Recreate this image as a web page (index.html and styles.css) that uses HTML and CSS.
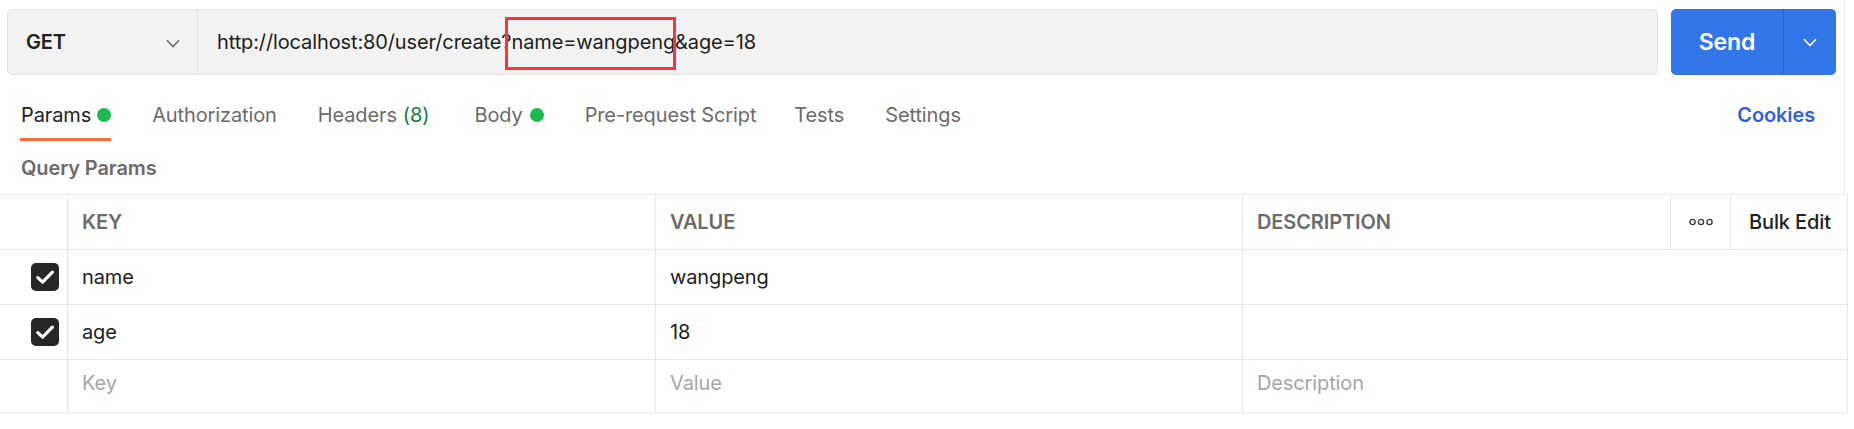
FILE: index.html
```html
<!DOCTYPE html>
<html lang="en">
<head>
<meta charset="utf-8">
<title>Request</title>
<link rel="stylesheet" href="styles.css">
</head>
<body>
<div class="app">
  <div class="reqbar">
    <div class="urlbox">
      <div class="method">
        <span class="method-name">GET</span>
        <svg class="chev" width="14" height="9" viewBox="0 0 14 9"><path d="M1 1.2 L7 7.6 L13 1.2" fill="none" stroke="#6b6b6b" stroke-width="1.5"/></svg>
      </div>
      <div class="url">http://localhost:80/user/create?name=wangpeng&amp;age=18<span class="mark"></span></div>
    </div>
    <div class="send">
      <span class="send-label">Send</span>
      <span class="send-drop"><svg width="14" height="9" viewBox="0 0 14 9"><path d="M1 1.2 L7 7.6 L13 1.2" fill="none" stroke="#ffffff" stroke-width="1.6"/></svg></span>
    </div>
  </div>

  <div class="tabs">
    <div class="tab active">Params<span class="dot"></span></div>
    <div class="tab">Authorization</div>
    <div class="tab">Headers <span class="count">(8)</span></div>
    <div class="tab tab-body">Body<span class="dot"></span></div>
    <div class="tab">Pre-request Script</div>
    <div class="tab tab-tests">Tests</div>
    <div class="tab">Settings</div>
    <div class="cookies">Cookies</div>
  </div>

  <div class="section-title">Query Params</div>
</div>

<div class="table">
  <div class="row head">
    <div class="cell"></div>
    <div class="cell pad">KEY</div>
    <div class="cell pad">VALUE</div>
    <div class="cell pad">DESCRIPTION</div>
    <div class="cell center"><svg width="24" height="8" viewBox="0 0 24 8"><circle cx="3.5" cy="4" r="2.6" fill="none" stroke="#3a3a3a" stroke-width="1.4"/><circle cx="12" cy="4" r="2.6" fill="none" stroke="#3a3a3a" stroke-width="1.4"/><circle cx="20.5" cy="4" r="2.6" fill="none" stroke="#3a3a3a" stroke-width="1.4"/></svg></div>
    <div class="cell bulk">Bulk Edit</div>
  </div>
  <div class="row body">
    <div class="cell chk"><span class="box"><svg width="28" height="28" viewBox="0 0 28 28"><path d="M6.8 14.6 L11.6 19.2 L21.4 9.2" fill="none" stroke="#fff" stroke-width="3.2" stroke-linecap="round" stroke-linejoin="round"/></svg></span></div>
    <div class="cell pad">name</div>
    <div class="cell pad">wangpeng</div>
    <div class="cell pad"></div>
  </div>
  <div class="row body">
    <div class="cell chk"><span class="box"><svg width="28" height="28" viewBox="0 0 28 28"><path d="M6.8 14.6 L11.6 19.2 L21.4 9.2" fill="none" stroke="#fff" stroke-width="3.2" stroke-linecap="round" stroke-linejoin="round"/></svg></span></div>
    <div class="cell pad">age</div>
    <div class="cell pad">18</div>
    <div class="cell pad"></div>
  </div>
  <div class="row body last">
    <div class="cell"></div>
    <div class="cell pad ph">Key</div>
    <div class="cell pad ph">Value</div>
    <div class="cell pad ph">Description</div>
  </div>
</div>
</body>
</html>
```

FILE: styles.css
```css
* { box-sizing: border-box; }
html, body { margin: 0; padding: 0; background: #ffffff; }
body {
  font-family: Inter, "Noto Sans", "Liberation Sans", sans-serif;
  font-size: 20px;
  letter-spacing: -0.12px;
  color: #212121;
  width: 1854px;
  height: 429px;
  overflow: hidden;
}
.app {
  width: 1845px;
  border-right: 1px solid #ececec;
}
.reqbar {
  display: flex;
  padding: 9px 0 0 7px;
  gap: 13px;
  height: 75px;
}
.urlbox {
  position: relative;
  display: flex;
  width: 1651px;
  height: 66px;
  background: #f2f2f2;
  border: 1px solid #e4e4e4;
  border-radius: 5px;
}
.method {
  width: 190px;
  display: flex;
  align-items: center;
  justify-content: space-between;
  padding: 0 17px 0 18px;
  border-right: 1px solid #e2e2e2;
}
.method-name {
  font-weight: 600;
  font-size: 20px;
  color: #212121;
}
.chev { margin-top: 2px; }
.url {
  display: flex;
  align-items: center;
  padding-left: 19px;
  font-size: 20px;
  color: #212121;
}
.mark {
  position: absolute;
  left: 497px;
  top: 7px;
  width: 171px;
  height: 53px;
  border: 3px solid #f2373a;
}
.send {
  display: flex;
  width: 165px;
  height: 66px;
  background: #3276e8;
  border-radius: 5px;
  color: #ffffff;
}
.send-label {
  width: 113px;
  display: flex;
  align-items: center;
  justify-content: center;
  font-weight: 600;
  font-size: 23px;
  border-right: 1px solid #2a66cf;
}
.send-drop {
  flex: 1;
  display: flex;
  align-items: center;
  justify-content: center;
}
.tabs {
  display: flex;
  align-items: flex-end;
  gap: 40px;
  padding: 26px 0 0 20px;
}
.tab {
  display: flex;
  align-items: center;
  line-height: 28px;
  padding: 0 0 9px 1px;
  border-bottom: 3px solid transparent;
  color: #6b6b6b;
  white-space: nowrap;
}
.tab.active {
  color: #212121;
  border-bottom-color: #ff6c37;
}
.tab-body { margin-left: 4px; }
.tab-tests { margin-left: -3px; }
.dot {
  display: inline-block;
  width: 14px;
  height: 14px;
  border-radius: 50%;
  background: #1fb953;
  margin-left: 7px;
}
.tab.active .dot { margin-left: 6px; }
.count { color: #0f7f45; margin-left: 6px; }
.cookies {
  margin-left: auto;
  margin-right: 29px;
  align-self: flex-start;
  line-height: 28px;
  font-weight: 600;
  color: #2f63cf;
}
.section-title {
  height: 53px;
  padding: 13px 0 0 21px;
  line-height: 28px;
  font-weight: 600;
  color: #6b6b6b;
}
.table {
  width: 1848px;
  border-top: 1px solid #e8e8e8;
  border-right: 1px solid #e8e8e8;
}
.row {
  display: grid;
  height: 55px;
  border-bottom: 1px solid #e8e8e8;
}
.row.head { grid-template-columns: 68px 588px 587px 428px 60px 1fr; }
.row.body { grid-template-columns: 68px 588px 587px 1fr; }
.row.body .cell.pad { padding-bottom: 1px; }
.row.last { height: 53px; }
.row.last .cell.pad { padding-bottom: 7px; }
.cell {
  display: flex;
  align-items: center;
  border-right: 1px solid #e8e8e8;
  white-space: nowrap;
}
.cell:last-child { border-right: none; }
.head .cell { font-weight: 600; color: #6b6b6b; }
.pad { padding-left: 14px; }
.center { justify-content: center; }
.head .bulk { color: #212121; font-weight: 500; padding-left: 18px; }
.chk { justify-content: flex-end; padding-right: 8px; }
.box {
  width: 28px;
  height: 28px;
  border-radius: 5px;
  background: #262626;
  display: flex;
  align-items: center;
  justify-content: center;
}
.ph { color: #a6a6a6; }
```
